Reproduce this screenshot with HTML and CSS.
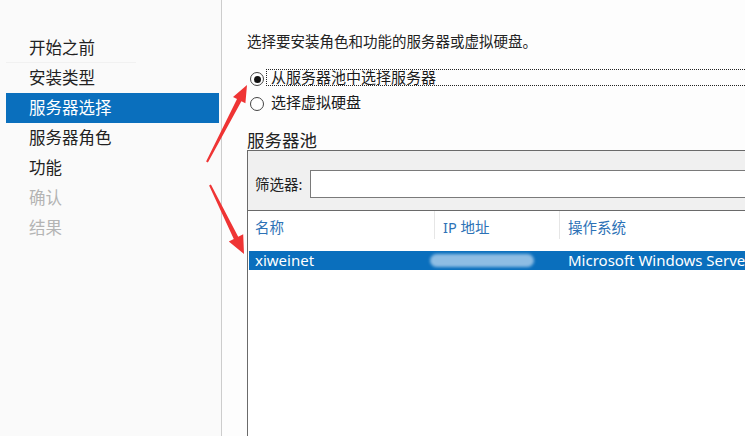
FILE: index.html
```html
<!DOCTYPE html>
<html lang="zh-CN">
<head>
<meta charset="utf-8">
<title>服务器选择</title>
<link rel="stylesheet" href="styles.css">
</head>
<body>
<div class="window">
  <nav class="steps">
    <div class="step first">开始之前</div>
    <div class="step">安装类型</div>
    <div class="step active">服务器选择</div>
    <div class="step">服务器角色</div>
    <div class="step">功能</div>
    <div class="step disabled">确认</div>
    <div class="step disabled">结果</div>
  </nav>
  <main class="content">
    <p class="desc">选择要安装角色和功能的服务器或虚拟硬盘。</p>
    <div class="options">
      <div class="opt"><span class="radio checked"></span><span class="opt-text focus">从服务器池中选择服务器</span></div>
      <div class="opt second"><span class="radio"></span><span class="opt-text">选择虚拟硬盘</span></div>
    </div>
    <h2 class="pool-title">服务器池</h2>
    <div class="pool">
      <div class="filter">
        <span class="filter-label">筛选器:</span>
        <div class="filter-box"></div>
      </div>
      <div class="grid">
        <div class="thead">
          <div class="cell c1">名称</div>
          <div class="cell c2">IP 地址</div>
          <div class="cell c3">操作系统</div>
        </div>
        <div class="trow selected">
          <div class="cell c1">xiweinet</div>
          <div class="cell c2"><span class="smear"></span></div>
          <div class="cell c3">Microsoft Windows Server 2016 Datacenter</div>
        </div>
      </div>
    </div>
  </main>
  <svg class="arrows" width="745" height="436" viewBox="0 0 745 436">
    <polygon points="247,85 245.4,103.3 241.4,101.3 207.9,162.5 206.1,161.5 237,98.9 233,96.9" fill="#ef3434"/>
    <polygon points="244,254 228.8,241.4 233.8,238.95 209.1,185.4 210.9,184.6 238.2,236.7 243.2,234.3" fill="#ef3434"/>
  </svg>
</div>
</body>
</html>
```
FILE: styles.css
```css
html, body {
  margin: 0;
  padding: 0;
  background: #fcfcfc;
}
body {
  font-family: "Noto Sans", "Noto Sans CJK SC", sans-serif;
  color: #1e1e1e;
}
.window {
  position: relative;
  width: 745px;
  height: 436px;
  overflow: hidden;
  display: flex;
  background: #fcfcfc;
}
.steps {
  width: 222px;
  flex: none;
  border-right: 1px solid #cdcdcd;
  padding-top: 33px;
  box-sizing: border-box;
  background: #fafafa;
}
.step {
  position: relative;
  margin-left: 6px;
  width: 213px;
  height: 30px;
  line-height: 30px;
  padding-left: 23px;
  box-sizing: border-box;
  font-size: 16.5px;
  color: #222;
}
.step.first::after {
  content: "";
  position: absolute;
  left: 0;
  bottom: 0;
  width: 130px;
  height: 1px;
  background: #f1f1f1;
}
.step.active {
  background: #0a6fbd;
  color: #fff;
}
.step.disabled {
  color: #b4b4b4;
}
.content {
  flex: 1;
  min-width: 0;
  padding-left: 25px;
  padding-top: 31px;
  background: #fdfdfd;
}
.desc {
  margin: 0;
  font-size: 14.5px;
  line-height: 20px;
  height: 20px;
  white-space: nowrap;
  color: #222;
}
.options {
  margin-top: 18px;
}
.opt {
  display: flex;
  align-items: center;
  height: 17px;
}
.opt.second {
  margin-top: 8px;
}
.radio {
  flex: none;
  width: 14px;
  height: 14px;
  margin-left: 3px;
  margin-top: 3px;
  border: 1px solid #444;
  border-radius: 50%;
  box-sizing: border-box;
  background: #fff;
  display: flex;
  align-items: center;
  justify-content: center;
}
.radio.checked::before {
  content: "";
  width: 7px;
  height: 7px;
  border-radius: 50%;
  background: #111;
}
.opt-text {
  flex: 1;
  margin-left: 2px;
  margin-right: -20px;
  height: 17px;
  line-height: 15px;
  padding-left: 4px;
  border: 1px dotted transparent;
  box-sizing: border-box;
  font-size: 15px;
  white-space: nowrap;
  color: #1a1a1a;
}
.opt-text.focus {
  border-color: #222;
}
.pool-title {
  margin: 19px 0 0 0;
  font-size: 17.5px;
  font-weight: normal;
  line-height: 20px;
  height: 20px;
  color: #222;
}
.pool {
  width: calc(100% + 20px);
  height: 300px;
  border: 1px solid #6a6a6a;
  box-sizing: border-box;
  background: #fff;
}
.filter {
  display: flex;
  align-items: center;
  height: 60px;
  padding: 19px 0 13px 7px;
  box-sizing: border-box;
  background: #f0f0f0;
  border-bottom: 1px solid #6a6a6a;
}
.filter-label {
  font-size: 14.5px;
  width: 55px;
  flex: none;
  color: #222;
}
.filter-box {
  flex: 1;
  height: 28px;
  border: 1px solid #7a7a7a;
  box-sizing: border-box;
  background: #fff;
}
.grid {
  background: #fff;
}
.thead, .trow {
  display: flex;
  white-space: nowrap;
}
.thead {
  height: 28px;
  font-size: 14.5px;
  color: #2d72b6;
}
.thead .cell {
  padding-top: 6px;
  line-height: 20px;
  border-right: 1px solid #e6e6e6;
}
.cell {
  box-sizing: border-box;
  padding-left: 7px;
}
.c1 { width: 187px; flex: none; }
.c2 { width: 125px; flex: none; padding-left: 8px; }
.c3 { flex: 1; padding-left: 8px; overflow: hidden; }
.trow {
  margin-top: 12px;
  height: 19px;
  line-height: 19px;
  font-size: 15px;
}
.trow.selected {
  margin-left: 1px;
  background: #0a6fbd;
  color: #fff;
}
.trow .c1 { width: 186px; padding-left: 6px; }
.smear {
  display: inline-block;
  width: 104px;
  height: 13px;
  margin-left: -13px;
  margin-top: 3px;
  vertical-align: top;
  border-radius: 8px;
  background: #8ebde3;
  filter: blur(1.5px);
}
.arrows {
  position: absolute;
  left: 0;
  top: 0;
  pointer-events: none;
}
```
